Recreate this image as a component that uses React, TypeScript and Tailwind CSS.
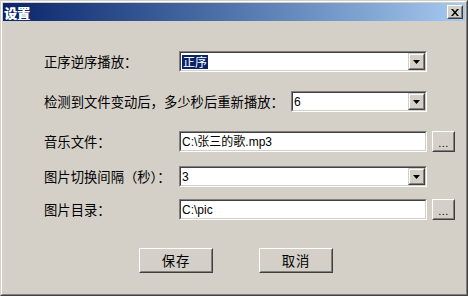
import React from "react";

function Sunken({ children, className = "" }: { children?: React.ReactNode; className?: string }) {
  return (
    <div className={`border border-t-[#808080] border-l-[#808080] border-b-white border-r-white ${className}`}>
      <div className="h-full border border-t-[#404040] border-l-[#404040] border-b-[#d4d0c8] border-r-[#d4d0c8] bg-white flex items-center">
        {children}
      </div>
    </div>
  );
}

function Raised({ children, className = "" }: { children?: React.ReactNode; className?: string }) {
  return (
    <div className={`border border-t-white border-l-white border-b-[#404040] border-r-[#404040] bg-[#d4d0c8] ${className}`}>
      <div className="h-full border border-t-[#d4d0c8] border-l-[#d4d0c8] border-b-[#808080] border-r-[#808080] flex items-center justify-center">
        {children}
      </div>
    </div>
  );
}

function DropBtn() {
  return (
    <div className="w-[17px] h-full shrink-0 border border-t-[#d4d0c8] border-l-[#d4d0c8] border-b-[#404040] border-r-[#404040] bg-[#d4d0c8]">
      <div className="h-full border border-t-white border-l-white border-b-[#808080] border-r-[#808080] flex items-center justify-center">
        <svg width="7" height="4" viewBox="0 0 7 4">
          <path d="M0 0H7L3.5 4Z" fill="#000" />
        </svg>
      </div>
    </div>
  );
}

function Combo({ children, className = "" }: { children?: React.ReactNode; className?: string }) {
  return (
    <Sunken className={className}>
      <div className="flex-1 h-full flex items-center pl-[1px] text-[12px] leading-none text-black font-['Liberation_Sans','Noto_Sans_CJK_SC',sans-serif] overflow-hidden whitespace-nowrap">
        {children}
      </div>
      <DropBtn />
    </Sunken>
  );
}

function TextBox({ value, className = "" }: { value: string; className?: string }) {
  return (
    <Sunken className={className}>
      <div className="flex-1 h-full flex items-center pl-[1px] text-[12px] leading-none text-black font-['Liberation_Sans','Noto_Sans_CJK_SC',sans-serif] whitespace-nowrap">
        {value}
      </div>
    </Sunken>
  );
}

function Browse() {
  return (
    <Raised className="w-[23px] h-[21px] ml-[5px] shrink-0">
      <span className="text-[11px] leading-none text-black font-['Liberation_Sans',sans-serif] tracking-[0.5px] mt-[3px]">...</span>
    </Raised>
  );
}

const labelCls = "shrink-0 text-[13.33px] leading-none text-black font-['Noto_Sans_CJK_SC',sans-serif] whitespace-nowrap";

export default function App() {
  return (
    <div className="w-[468px] h-[296px] bg-[#d4d0c8] border border-t-[#d4d0c8] border-l-[#d4d0c8] border-b-[#404040] border-r-[#404040]">
      <div className="h-full border border-t-white border-l-white border-b-[#808080] border-r-[#808080] p-[1px] flex flex-col">
        {/* Title bar */}
        <div className="h-[18px] shrink-0 flex items-center justify-between bg-gradient-to-r from-[#0a246a] to-[#a6caf0] pl-[1px] pr-[2px]">
          <span className="text-[13px] leading-none font-bold text-white font-['Noto_Sans_CJK_SC',sans-serif] [text-shadow:0.6px_0_0_#fff]">设置</span>
          <div className="w-[16px] h-[14px] border border-t-white border-l-white border-b-[#404040] border-r-[#404040] bg-[#d4d0c8]">
            <div className="h-full border border-t-[#d4d0c8] border-l-[#d4d0c8] border-b-[#808080] border-r-[#808080] flex items-center justify-center">
              <svg width="8" height="7" viewBox="0 0 8 7">
                <path d="M0 0H2L4 2.5L6 0H8L5 3.5L8 7H6L4 4.5L2 7H0L3 3.5Z" fill="#000" />
              </svg>
            </div>
          </div>
        </div>

        {/* Body */}
        <div className="flex-1 flex flex-col pt-[30px] pl-[41px]">
          <div className="flex items-center h-[21px]">
            <div className={`${labelCls} w-[135px]`}>正序逆序播放：</div>
            <Combo className="w-[248px] h-[21px]">
              <span className="bg-[#0a246a] text-white px-[1px] py-[1px] font-['Noto_Sans_CJK_SC',sans-serif]">正序</span>
            </Combo>
          </div>

          <div className="flex items-center h-[21px] mt-[19px]">
            <div className={`${labelCls} w-[247px]`}>检测到文件变动后，多少秒后重新播放：</div>
            <Combo className="w-[136px] h-[21px]">6</Combo>
          </div>

          <div className="flex items-center h-[21px] mt-[19px]">
            <div className={`${labelCls} w-[135px]`}>音乐文件：</div>
            <TextBox className="w-[248px] h-[21px]" value="C:\张三的歌.mp3" />
            <Browse />
          </div>

          <div className="flex items-center h-[21px] mt-[14px]">
            <div className={`${labelCls} w-[135px]`}>图片切换间隔（秒）：</div>
            <Combo className="w-[248px] h-[21px]">3</Combo>
          </div>

          <div className="flex items-center h-[21px] mt-[12px]">
            <div className={`${labelCls} w-[135px]`}>图片目录：</div>
            <TextBox className="w-[248px] h-[21px]" value="C:\pic" />
            <Browse />
          </div>

          <div className="flex mt-[28px] pl-[95px] gap-[46px]">
            <Raised className="w-[74px] h-[25px]">
              <span className="text-[13.33px] leading-none text-black font-['Noto_Sans_CJK_SC',sans-serif] tracking-[1px]">保存</span>
            </Raised>
            <Raised className="w-[74px] h-[25px]">
              <span className="text-[13.33px] leading-none text-black font-['Noto_Sans_CJK_SC',sans-serif] tracking-[1px]">取消</span>
            </Raised>
          </div>
        </div>
      </div>
    </div>
  );
}
